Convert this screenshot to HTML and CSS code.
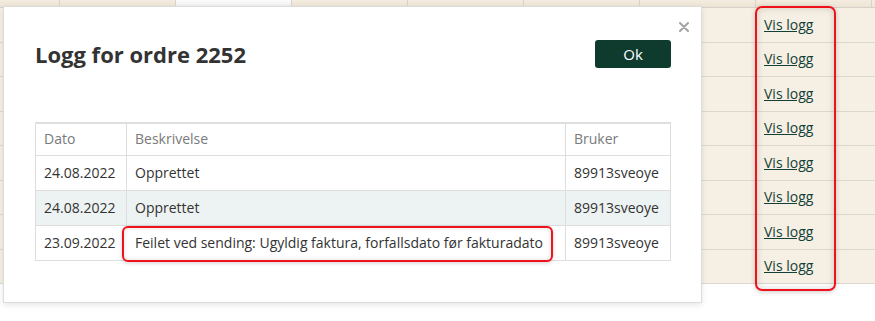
FILE: index.html
```html
<!DOCTYPE html>
<html lang="no">
<head>
    <meta charset="UTF-8">
    <meta name="viewport" content="width=device-width, initial-scale=1.0">
    <title>Logg for ordre 2252</title>
    <link rel="stylesheet" href="styles.css">
</head>
<body>
    <div class="page">
        <div class="sheet">
            <div class="sheet-head">
                <span class="head-cell first"></span>
                <span class="head-cell"></span>
                <span class="head-cell active"></span>
                <span class="head-cell"></span>
                <span class="head-cell"></span>
                <span class="head-cell"></span>
                <span class="head-cell"></span>
                <span class="head-cell"></span>
            </div>
            <div class="sheet-row"><span></span><a class="log-link" href="#">Vis logg</a></div>
            <div class="sheet-row"><span></span><a class="log-link" href="#">Vis logg</a></div>
            <div class="sheet-row"><span></span><a class="log-link" href="#">Vis logg</a></div>
            <div class="sheet-row"><span></span><a class="log-link" href="#">Vis logg</a></div>
            <div class="sheet-row"><span></span><a class="log-link" href="#">Vis logg</a></div>
            <div class="sheet-row"><span></span><a class="log-link" href="#">Vis logg</a></div>
            <div class="sheet-row"><span></span><a class="log-link" href="#">Vis logg</a></div>
            <div class="sheet-row"><span></span><a class="log-link" href="#">Vis logg</a></div>
            <!-- annotation around the link column -->
            <div class="column-mark"></div>
        </div>

        <div class="modal">
            <button class="close" aria-label="Lukk">
                <svg width="10" height="10" viewBox="0 0 10 10">
                    <path d="M1 1 L9 9 M9 1 L1 9" stroke="#a3a3a3" stroke-width="2" stroke-linecap="round"/>
                </svg>
            </button>
            <div class="modal-head">
                <h1>Logg for ordre 2252</h1>
                <button class="ok">Ok</button>
            </div>
            <table class="log-table">
                <colgroup>
                    <col class="col-date">
                    <col class="col-desc">
                    <col class="col-user">
                </colgroup>
                <thead>
                    <tr>
                        <th>Dato</th>
                        <th>Beskrivelse</th>
                        <th>Bruker</th>
                    </tr>
                </thead>
                <tbody>
                    <tr>
                        <td>24.08.2022</td>
                        <td>Opprettet</td>
                        <td>89913sveoye</td>
                    </tr>
                    <tr class="striped">
                        <td>24.08.2022</td>
                        <td>Opprettet</td>
                        <td>89913sveoye</td>
                    </tr>
                    <tr>
                        <td>23.09.2022</td>
                        <td class="flagged"><span class="flag"></span><span class="flag-text">Feilet ved sending: Ugyldig faktura, forfallsdato før fakturadato</span></td>
                        <td>89913sveoye</td>
                    </tr>
                </tbody>
            </table>
        </div>
    </div>
</body>
</html>
```

FILE: styles.css
```css
body {
    margin: 0;
    font-family: 'Open Sans', 'DejaVu Sans', sans-serif;
    font-size: 14px;
    color: #333;
    background: #fff;
}

.page {
    position: relative;
    width: 875px;
    height: 321px;
    overflow: hidden;
}

/* background sheet behind the dialog */
.sheet {
    position: relative;
}

.sheet-head {
    display: flex;
    height: 8px;
    border-bottom: 1px solid #d6d1c9;
    box-sizing: border-box;
    background: linear-gradient(#f3ecdf, #ede4d4);
}

.head-cell {
    flex: 0 0 116px;
    border-right: 1px solid #d9d3ca;
    box-sizing: border-box;
}

.head-cell.first {
    flex-basis: 60px;
}

.head-cell.active {
    background: linear-gradient(#fbfbfb, #efefef);
}

.sheet-row {
    display: grid;
    grid-template-columns: 755px 116px;
    align-items: center;
    height: 34.5px;
    box-sizing: border-box;
    border-bottom: 1px solid #dcd7cf;
    background-color: #f6efe3;
}

.log-link {
    padding-left: 9px;
    color: #143f38;
    text-decoration: underline;
    line-height: 20px;
}

.column-mark {
    position: absolute;
    left: 755px;
    top: 6px;
    width: 81px;
    height: 285px;
    box-sizing: border-box;
    border: 2px solid #f0121b;
    border-radius: 7px;
    box-shadow: 0 1px 5px rgba(0, 0, 0, 0.2), inset 0 0 7px rgba(0, 0, 0, 0.16);
}

/* dialog */
.modal {
    position: absolute;
    left: 3px;
    top: 6px;
    width: 699px;
    box-sizing: border-box;
    padding: 33px 30px 41px 31px;
    background: #fff;
    border: 1px solid #dcdcdc;
    box-shadow: 0 2px 6px rgba(0, 0, 0, 0.1);
}

.close {
    position: absolute;
    top: 15px;
    right: 12px;
    padding: 0;
    border: none;
    background: none;
    line-height: 0;
    cursor: pointer;
}

.modal-head {
    display: flex;
    justify-content: space-between;
    align-items: center;
    height: 28px;
}

.modal-head h1 {
    margin: 0;
    font-size: 22px;
    font-weight: 700;
    line-height: 24px;
    color: #333;
}

.ok {
    width: 76px;
    height: 28px;
    padding: 0;
    font-family: inherit;
    font-size: 15px;
    color: #fff;
    background-color: #0e3b2e;
    border: none;
    border-radius: 3px;
    cursor: pointer;
}

.log-table {
    margin-top: 54px;
    width: 636px;
    table-layout: fixed;
    border-collapse: separate;
    border-spacing: 0;
    border-top: 2px solid #dedede;
    border-left: 1px solid #dedede;
}

.col-date {
    width: 91px;
}

.col-desc {
    width: 439px;
}

.col-user {
    width: 105px;
}

.log-table th,
.log-table td {
    text-align: left;
    line-height: 20px;
    white-space: nowrap;
    border-right: 1px solid #dedede;
    border-bottom: 1px solid #dedede;
}

.log-table th {
    padding: 5px 8px 6px;
    font-weight: 400;
    color: #7a7a7a;
}

.log-table td {
    padding: 7px 8px;
    color: #333;
}

.log-table tr.striped td {
    background-color: #edf2f2;
}

.flagged {
    position: relative;
}

.flag {
    position: absolute;
    left: -5px;
    top: 0;
    right: 12px;
    bottom: -2px;
    border: 2px solid #f0121b;
    border-radius: 6px;
    background: #fff;
    box-shadow: 0 1px 4px rgba(0, 0, 0, 0.18), inset 0 0 5px rgba(0, 0, 0, 0.12);
}

.flag-text {
    position: relative;
}
```
